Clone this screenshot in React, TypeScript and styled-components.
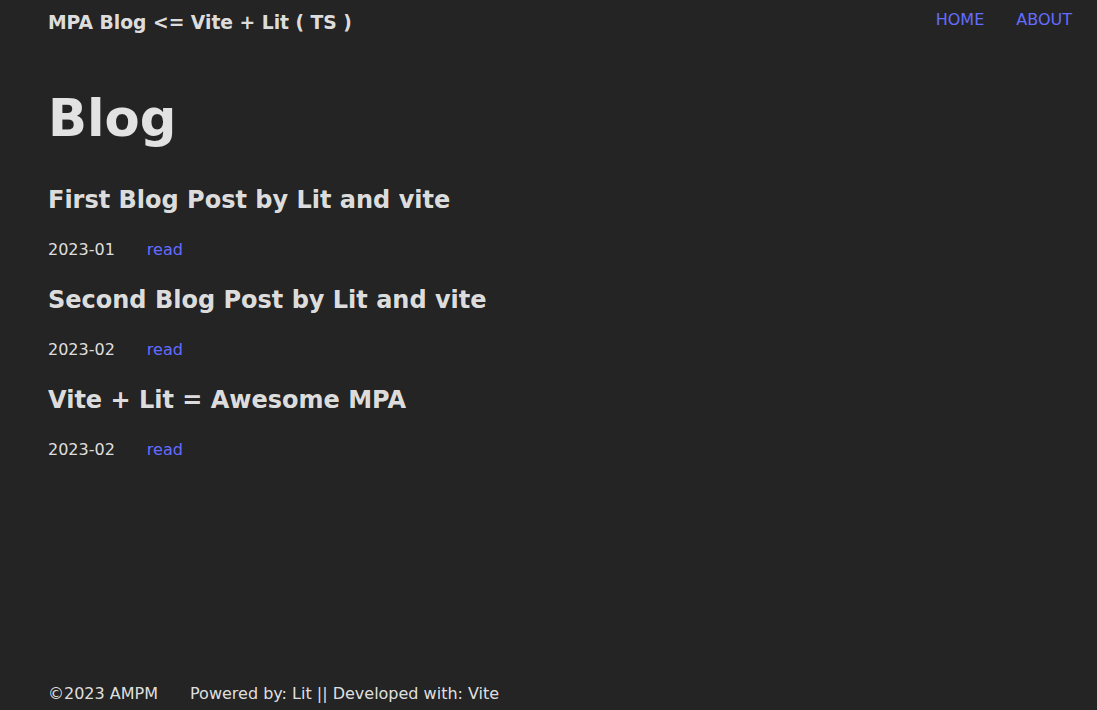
import React from "react";
import styled, { createGlobalStyle } from "styled-components";

const GlobalStyle = createGlobalStyle`
  html, body { margin: 0; padding: 0; }
  body {
    background: #242424;
    color: rgba(255, 255, 255, 0.87);
    font-family: "DejaVu Sans", sans-serif;
    font-size: 16px;
    line-height: 1.5;
  }
`;

const Page = styled.div`
  min-height: 100vh;
  display: flex;
  flex-direction: column;
  padding: 0 25px 0 48px;
  box-sizing: border-box;
`;

const Header = styled.header`
  display: flex;
  justify-content: space-between;
  align-items: center;
  height: 44px;
`;

const SiteTitle = styled.div`
  font-size: 18.72px;
  font-weight: bold;
  padding-top: 2px;
`;

const Nav = styled.nav`
  display: flex;
  gap: 32px;
  align-self: flex-start;
  padding-top: 8px;
`;

const NavLink = styled.a`
  color: #646cff;
  text-decoration: none;
  font-size: 16px;
`;

const Main = styled.main`
  flex: 1;
`;

const Title = styled.h1`
  font-size: 51.2px;
  line-height: 1.1;
  margin: 46px 0 36px;
`;

const Post = styled.article`
  display: flex;
  flex-direction: column;
`;

const PostTitle = styled.h2`
  font-size: 24px;
  line-height: 36px;
  margin: 0 0 20px;
`;

const Meta = styled.div`
  display: flex;
  gap: 32px;
  height: 44px;
  line-height: 24px;
`;

const ReadLink = styled.a`
  color: #646cff;
  text-decoration: none;
`;

const Footer = styled.footer`
  display: flex;
  gap: 32px;
  padding-bottom: 4px;
`;

const posts = [
  { title: "First Blog Post by Lit and vite", date: "2023-01" },
  { title: "Second Blog Post by Lit and vite", date: "2023-02" },
  { title: "Vite + Lit = Awesome MPA", date: "2023-02" },
];

export default function App() {
  return (
    <>
      <GlobalStyle />
      <Page>
        <Header>
          <SiteTitle>MPA Blog &lt;= Vite + Lit ( TS )</SiteTitle>
          <Nav>
            <NavLink href="#">HOME</NavLink>
            <NavLink href="#">ABOUT</NavLink>
          </Nav>
        </Header>
        <Main>
          <Title>Blog</Title>
          {posts.map((p) => (
            <Post key={p.title}>
              <PostTitle>{p.title}</PostTitle>
              <Meta>
                <span>{p.date}</span>
                <ReadLink href="#">read</ReadLink>
              </Meta>
            </Post>
          ))}
        </Main>
        <Footer>
          <span>©2023 AMPM</span>
          <span>Powered by: Lit || Developed with: Vite</span>
        </Footer>
      </Page>
    </>
  );
}
